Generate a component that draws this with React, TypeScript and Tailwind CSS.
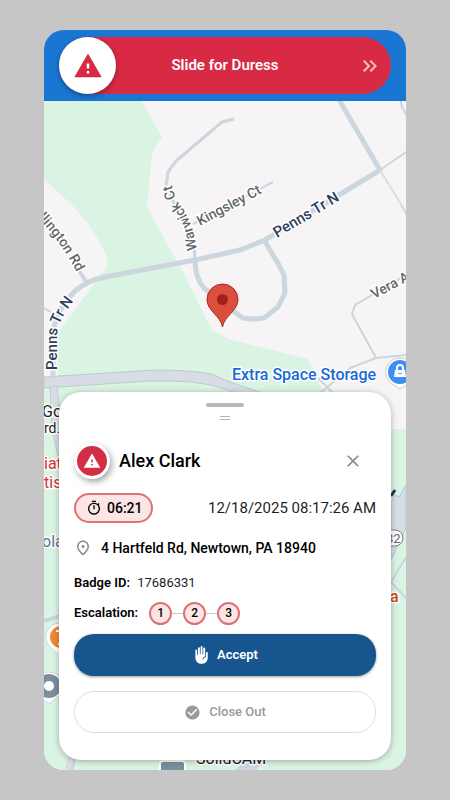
import { useState } from 'react';
import {
  MdCheckCircle,
  MdClose,
  MdFrontHand,
  MdKeyboardDoubleArrowRight,
  MdOutlinePlace,
  MdOutlineTimer,
  MdWarning,
} from 'react-icons/md';

const alert = {
  name: 'Alex Clark',
  elapsed: '06:21',
  timestamp: '12/18/2025 08:17:26 AM',
  address: '4 Hartfeld Rd, Newtown, PA 18940',
  badgeId: '17686331',
  escalation: [1, 2, 3],
};

function DuressSlider() {
  const [value, setValue] = useState(0);

  return (
    <header className="bg-[#1976d2] px-[15px] py-[7px]">
      <div className="relative flex h-[57px] items-center justify-center rounded-full bg-[#d82945]">
        <label htmlFor="duress" className="text-[15px] font-semibold text-white">
          Slide for Duress
        </label>
        <MdKeyboardDoubleArrowRight className="absolute right-[9px] size-6 text-[#f7bcc6]" />
        <div
          className="absolute top-0 flex size-[57px] items-center justify-center rounded-full bg-white shadow-[0_2px_5px_rgba(0,0,0,0.35)]"
          style={{ left: `calc((100% - 57px) * ${value / 100})` }}
        >
          <MdWarning className="size-[30px] text-[#d82945]" />
        </div>
        <input
          id="duress"
          type="range"
          min={0}
          max={100}
          value={value}
          onChange={(e) => setValue(Number(e.target.value))}
          className="absolute inset-0 h-full w-full cursor-pointer opacity-0"
        />
      </div>
    </header>
  );
}

function MapView() {
  return (
    <svg
      viewBox="44 101 362 669"
      preserveAspectRatio="xMidYMid slice"
      className="absolute inset-0 h-full w-full"
      aria-hidden="true"
    >
      <defs>
        <path id="warwick" d="M197 250 Q193 222 181 206 Q173 196 171 180" />
        <path id="penns-left" d="M57 370 L57 336 Q57 320 78 296" />
        <path id="wellington" d="M38 218 Q60 240 80 278" />
      </defs>

      {/* Land and parks */}
      <rect x="44" y="100" width="362" height="670" fill="#f6f4f5" />
      <path
        d="M44 100H141L162 137L152 153L147 207L166 242L180 266L212 330L228 339L308 359L314 375L330 400V429H406V770H44V378L58 378V333L93 285L101 273L107 267V257L100 243Q90 224 72 205L44 179Z"
        fill="#daf4e3"
      />
      <path d="M406 485L399 497L395 495L391 503V560L406 528Z" fill="#d6dde5" stroke="#bcc6d0" />

      {/* Highway */}
      <path
        d="M44 377L155 370Q190 370 212 374L222 379L262 393V402L215 386Q190 380 150 381L44 388Z"
        fill="#d8dde5"
        stroke="#bfc8d0"
      />
      <path d="M50 386L52 430L59 460L62 430L57 386Z" fill="#d8dde5" stroke="#c3ccd6" />
      <path d="M73 755L68 775" stroke="#c9d2de" strokeWidth="8" />
      <path d="M72 755L67 775" stroke="#d8dfe8" strokeWidth="5" />
      <path d="M44 621L60 616" stroke="#cbd3de" strokeWidth="4" />
      <path d="M235 770L242 764H262L256 770Z" fill="#ccd5e0" />
      <path d="M406 557L391 582L406 598" fill="none" stroke="#cfd3e0" strokeWidth="2" />

      {/* Streets */}
      <g fill="none" stroke="#cbd6de" strokeLinejoin="round">
        <path
          d="M53 378V330Q58 308 75 291Q88 280 105 277L195 260L240 250L265 240L380 170L338 98"
          strokeWidth="5"
        />
        <path
          d="M195 260Q195 278 204 288L237 314L243 318L253 319L264 318L278 307L285 293L284 275L279 265L264 240"
          strokeWidth="5"
        />
        <path d="M234 119L222 122L176 161L168 172L166 186L194 245L195 260" strokeWidth="3" />
        <path d="M380 170L406 152M400 98L402 107L407 116" strokeWidth="2" />
        <path d="M193 224L273 182M44 308L53 313" strokeWidth="2" />
        <path d="M76 266L87 283" strokeWidth="4" />
        <path d="M406 275L372 295L355 305L352 314L376 358" strokeWidth="2" />
        <path d="M406 355L376 358L350 368L318 395M318 378L336 396" strokeWidth="2" />
        <path d="M380 170L402 206" stroke="#dedede" strokeWidth="2" />
        <path d="M401 205L408 216" strokeWidth="2" />
      </g>

      {/* Street names */}
      <g
        fontFamily="Roboto, sans-serif"
        fontSize="14"
        fontWeight="500"
        fill="#62666a"
        stroke="#ffffff"
        strokeWidth="3"
        strokeLinejoin="round"
        paintOrder="stroke"
      >
        <text>
          <textPath href="#warwick">Warwick Ct</textPath>
        </text>
        <text transform="translate(200 226) rotate(-28)">Kingsley Ct</text>
        <text>
          <textPath href="#wellington">llington Rd</textPath>
        </text>
        <text transform="translate(374 299) rotate(-28)">Vera A</text>
        <g fill="#2c405c" fontSize="15">
          <text transform="translate(277 238) rotate(-31)">Penns Tr N</text>
          <text>
            <textPath href="#penns-left">Penns Tr N</textPath>
          </text>
        </g>
      </g>

      {/* Places */}
      <g
        fontFamily="Roboto, sans-serif"
        fontSize="16"
        stroke="#ffffff"
        strokeWidth="3"
        strokeLinejoin="round"
        paintOrder="stroke"
      >
        <text x="232" y="380" fontWeight="500" fill="#1a69d6">
          Extra Space Storage
        </text>
        <text x="42" y="417" fill="#222222">
          Go
        </text>
        <text x="44" y="433" fontSize="14" fill="#222222">
          rd.
        </text>
        <text x="44" y="469" fill="#d92f32">
          iat
        </text>
        <text x="44" y="488" fill="#d92f32">
          tis
        </text>
        <text x="42" y="547" fill="#5b7690">
          ola
        </text>
        <text x="390" y="602" fontWeight="500" fill="#c4500e">
          a
        </text>
        <text x="196" y="764" fill="#222222">
          SolidCAM
        </text>
      </g>
      <path d="M391 496L395 490" stroke="#27344c" strokeWidth="3" />
      <rect x="376" y="530" width="27" height="16" rx="8" fill="#ffffff" stroke="#7a7f84" />
      <text x="386" y="543" fontFamily="Roboto, sans-serif" fontSize="13" fill="#5f6368">
        32
      </text>

      {/* Storage marker */}
      <path
        d="M400 358A14 14 0 0 1 409 383L400 389L391 383A14 14 0 0 1 400 358Z"
        fill="#ffffff"
        stroke="#c9cdd2"
      />
      <circle cx="400" cy="372" r="12" fill="#3f8ff2" />
      <path d="M395 370H405L406 377H394Z" fill="#ffffff" />
      <path d="M397 370V368A3 3 0 0 1 403 368V370" fill="none" stroke="#ffffff" strokeWidth="2" />
      <path d="M398 373Q400 375 402 373" fill="none" stroke="#3f8ff2" />

      {/* Restaurant, generic and building markers */}
      <path d="M60 623A14 14 0 0 1 70 647L60 656L50 647A14 14 0 0 1 60 623Z" fill="#ffffff" stroke="#cfd3d2" />
      <circle cx="61" cy="637" r="11" fill="#f0883a" />
      <path d="M56 631H68L62 638V644M58 644H66" fill="none" stroke="#ffffff" strokeWidth="2" />
      <path d="M49 672A14 14 0 0 1 59 696L49 704L39 696A14 14 0 0 1 49 672Z" fill="#ffffff" stroke="#cfd3d2" />
      <circle cx="49" cy="686" r="12" fill="#78909c" />
      <circle cx="49" cy="686" r="5" fill="#ffffff" />
      <rect x="159" y="760" width="27" height="20" rx="4" fill="#ffffff" />
      <rect x="161" y="762" width="23" height="18" rx="2" fill="#78909c" />

      {/* Alert location */}
      <path
        d="M222.500 327C221 316 207 311 207 299.500A15.500 15.500 0 0 1 238 299.500C238 311 224 316 222.500 327Z"
        fill="#db4f40"
        stroke="#ad2418"
      />
      <circle cx="222.500" cy="299.500" r="5.500" fill="#a3201a" />
    </svg>
  );
}

function AlertCard() {
  return (
    <section className="relative flex flex-col rounded-[22px] bg-white px-[15px] pt-[11px] pb-[27px] shadow-[0_1px_6px_rgba(0,0,0,0.3)]">
      <div className="h-1 w-[38px] self-center rounded-full bg-[#b9b9b9]" />
      <div className="mt-[9px] h-1 w-[10px] self-center border-y border-[#b5b5b5]" />

      <div className="mt-[23px] flex h-9 items-center">
        <div className="flex size-9 items-center justify-center rounded-full border-[3px] border-white bg-[#d22f47] shadow-[2px_3px_6px_rgba(0,0,0,0.35)]">
          <MdWarning className="size-[18px] text-white" />
        </div>
        <h1 className="ml-[9px] text-lg font-medium text-black">{alert.name}</h1>
        <button type="button" aria-label="Close" className="mr-[13px] ml-auto text-[#8a8a8a]">
          <MdClose className="size-5" />
        </button>
      </div>

      <div className="mt-[14px] flex items-center justify-between">
        <div className="flex h-[30px] items-center gap-[5px] rounded-full border-2 border-[#dc7276] bg-[#fce5e5] pr-2 pl-[10px] text-sm font-medium text-black">
          <MdOutlineTimer className="size-4" />
          {alert.elapsed}
        </div>
        <time className="text-[15px] leading-5 text-[#1f1f1f]">{alert.timestamp}</time>
      </div>

      <div className="mt-[15px] flex h-5 items-center gap-[9px]">
        <MdOutlinePlace className="size-[18px] text-[#8a8a8a]" />
        <p className="text-sm font-medium text-black">{alert.address}</p>
      </div>

      <p className="mt-[15px] text-[13px] leading-5 text-[#1f1f1f]">
        <span className="mr-1 font-semibold text-black">Badge ID:</span>
        {' '}
        {alert.badgeId}
      </p>

      <div className="mt-2 flex h-6 items-center">
        <span className="mr-[11px] text-[13px] font-semibold text-black">Escalation:</span>
        {alert.escalation.map((level, index) => (
          <div key={level} className="flex items-center">
            {index > 0 && <div className="h-px w-[11px] bg-[#c9c9c9]" />}
            <div className="flex size-[23px] items-center justify-center rounded-full border-2 border-[#dc7276] bg-[#fce5e5] text-xs font-medium text-black">
              {level}
            </div>
          </div>
        ))}
      </div>

      <button
        type="button"
        className="mt-[9px] flex h-[42px] items-center justify-center gap-[7px] rounded-[20px] bg-[#17558f] text-[13px] font-semibold text-white shadow-[0_1px_3px_rgba(0,0,0,0.4)]"
      >
        <MdFrontHand className="size-[18px]" />
        Accept
      </button>
      <button
        type="button"
        className="mt-[15px] flex h-[42px] items-center justify-center gap-2 rounded-[20px] border border-[#dfdfdf] text-[13px] font-medium text-[#9a9a9a]"
      >
        <MdCheckCircle className="size-[17px]" />
        Close Out
      </button>
    </section>
  );
}

export default function App() {
  return (
    <div className="flex min-h-screen bg-[#c6c6c6] px-11 py-[30px] font-['Roboto',sans-serif]">
      <div className="flex flex-1 flex-col overflow-hidden rounded-[20px]">
        <DuressSlider />
        <main className="relative flex flex-1 flex-col justify-end px-[15px] pb-[10px]">
          <MapView />
          <AlertCard />
        </main>
      </div>
    </div>
  );
}
